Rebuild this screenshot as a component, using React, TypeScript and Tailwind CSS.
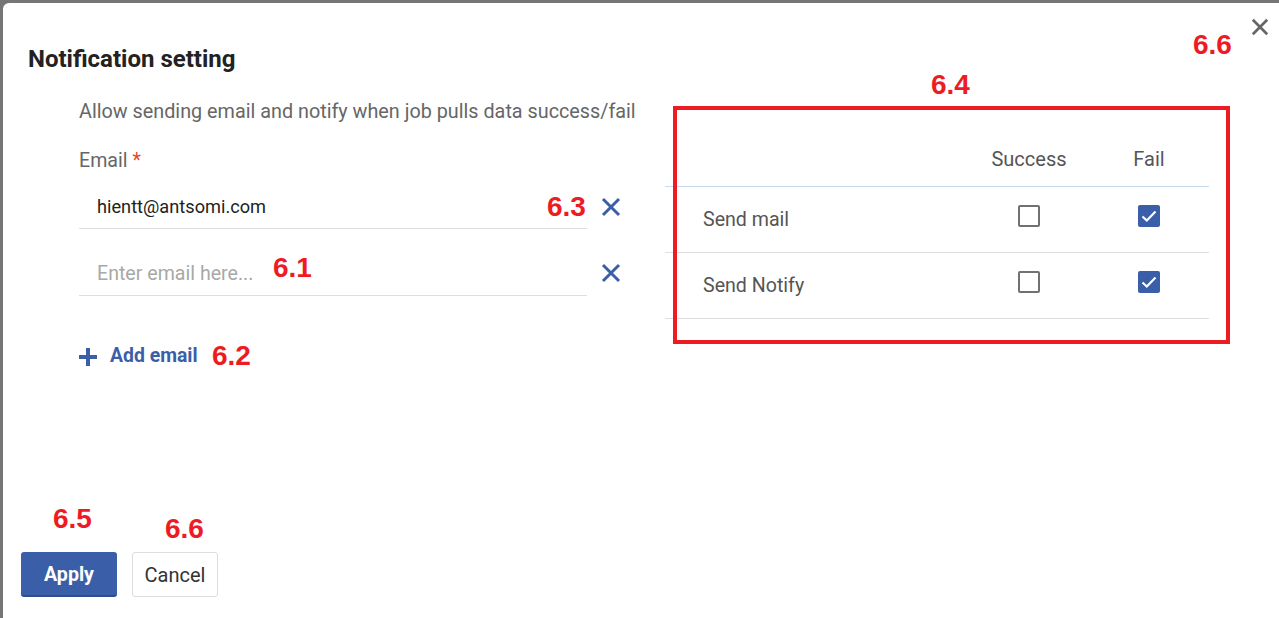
import React from "react";

const XIcon = ({ size, color, stroke }: { size: number; color: string; stroke: number }) => (
  <svg width={size} height={size} viewBox="0 0 20 20" fill="none">
    <path d="M2 2 L18 18 M18 2 L2 18" stroke={color} strokeWidth={stroke} strokeLinecap="butt" />
  </svg>
);

const Checkbox = ({ checked }: { checked: boolean }) =>
  checked ? (
    <div className="w-[22px] h-[22px] rounded-[2px] bg-[#3b5ea8] flex items-center justify-center">
      <svg width="22" height="22" viewBox="0 0 22 22" fill="none">
        <path d="M4.5 11.5 L8.8 15.5 L17.5 6.5" stroke="white" strokeWidth="2.2" />
      </svg>
    </div>
  ) : (
    <div className="w-[22px] h-[22px] rounded-[2px] border-2 border-[#717171] bg-white" />
  );

const Anno = ({ text, className }: { text: string; className: string }) => (
  <div
    className={`absolute text-[28px] leading-none font-bold text-[#ed1c24] ${className}`}
    style={{ fontFamily: '"Liberation Sans", Arial, sans-serif' }}
  >
    {text}
  </div>
);

export default function App() {
  return (
    <div
      className="w-[1279px] h-[618px] bg-[#767676] pt-[3px] pl-[3px] overflow-hidden"
      style={{ fontFamily: 'Roboto, "Noto Sans", sans-serif' }}
    >
      <div className="relative bg-white h-full rounded-tl-[6px] flex flex-col">
        <button className="absolute left-[1248px] top-[15px]">
          <XIcon size={18} color="#666666" stroke={3} />
        </button>

        <h2 className="mt-[42px] ml-[25px] text-[24px] leading-[28px] font-bold text-[#222222]">
          Notification setting
        </h2>

        <div className="flex mt-[27px]">
          <div className="ml-[76px] w-[543px] flex flex-col">
            <div className="text-[19.8px] leading-[24px] text-[#666666] whitespace-nowrap">
              Allow sending email and notify when job pulls data success/fail
            </div>
            <div className="mt-[25px] text-[19.6px] leading-[24px] text-[#666666]">
              Email <span className="text-[#e8472b]">*</span>
            </div>
            <div className="mt-[13px] flex items-center">
              <div className="w-[508px] h-[43px] border-b border-[#dedede] flex items-center pl-[18px] pb-[1px] text-[18.2px] text-[#222222]">
                hientt@antsomi.com
              </div>
              <button className="ml-[14px] -mt-[2px]">
                <XIcon size={20} color="#3b5ea8" stroke={3} />
              </button>
            </div>
            <div className="mt-[24px] flex items-center">
              <div className="w-[508px] h-[43px] border-b border-[#dedede] flex items-center pl-[18px] text-[19.6px] text-[#a8a8a8]">
                Enter email here...
              </div>
              <button className="ml-[14px] -mt-[4px]">
                <XIcon size={20} color="#3b5ea8" stroke={3} />
              </button>
            </div>
            <div className="mt-[48px] flex items-center h-[24px]">
              <svg width="20" height="20" viewBox="0 0 20 20" className="ml-[-1px] mt-[1px]">
                <path d="M10 1 V19 M1 10 H19" stroke="#3b5ea8" strokeWidth="4" />
              </svg>
              <span className="ml-[12px] text-[19.4px] font-bold text-[#3b5ea8]">Add email</span>
            </div>
          </div>

          <div className="ml-[43px] w-[544px] mt-[32px]">
            <div className="h-[55px] border-b border-[#c9dcef] flex items-center text-[20px] text-[#555555]">
              <div className="w-[304px]" />
              <div className="w-[120px] text-center">Success</div>
              <div className="w-[120px] text-center">Fail</div>
            </div>
            {["Send mail", "Send Notify"].map((label) => (
              <div key={label} className="h-[66px] border-b border-[#dedede] flex items-center text-[19.6px] text-[#555555]">
                <div className="w-[304px] pl-[38px]">{label}</div>
                <div className="w-[120px] flex justify-center -mt-[8px]">
                  <Checkbox checked={false} />
                </div>
                <div className="w-[120px] flex justify-center -mt-[8px]">
                  <Checkbox checked={true} />
                </div>
              </div>
            ))}
          </div>
        </div>

        <div className="mt-auto pl-[18px] pb-[21px] flex gap-[15px]">
          <button className="w-[96px] h-[45px] pt-[3px] rounded-[3px] bg-[#3b5ea8] border-b-2 border-[#2f4b8a] text-white text-[19.6px] font-bold">
            Apply
          </button>
          <button className="w-[86px] h-[45px] rounded-[3px] bg-white border border-[#dddddd] text-[#333333] text-[20px]">
            Cancel
          </button>
        </div>

        <div className="absolute left-[670px] top-[103px] w-[557px] h-[238px] border-4 border-[#ed1c24] pointer-events-none" />
        <Anno text="6.6" className="left-[1190px] top-[28px]" />
        <Anno text="6.4" className="left-[928px] top-[68px]" />
        <Anno text="6.3" className="left-[544px] top-[190px]" />
        <Anno text="6.1" className="left-[270px] top-[251px]" />
        <Anno text="6.2" className="left-[209px] top-[339px]" />
        <Anno text="6.5" className="left-[50px] top-[502px]" />
        <Anno text="6.6" className="left-[162px] top-[512px]" />
      </div>
    </div>
  );
}
